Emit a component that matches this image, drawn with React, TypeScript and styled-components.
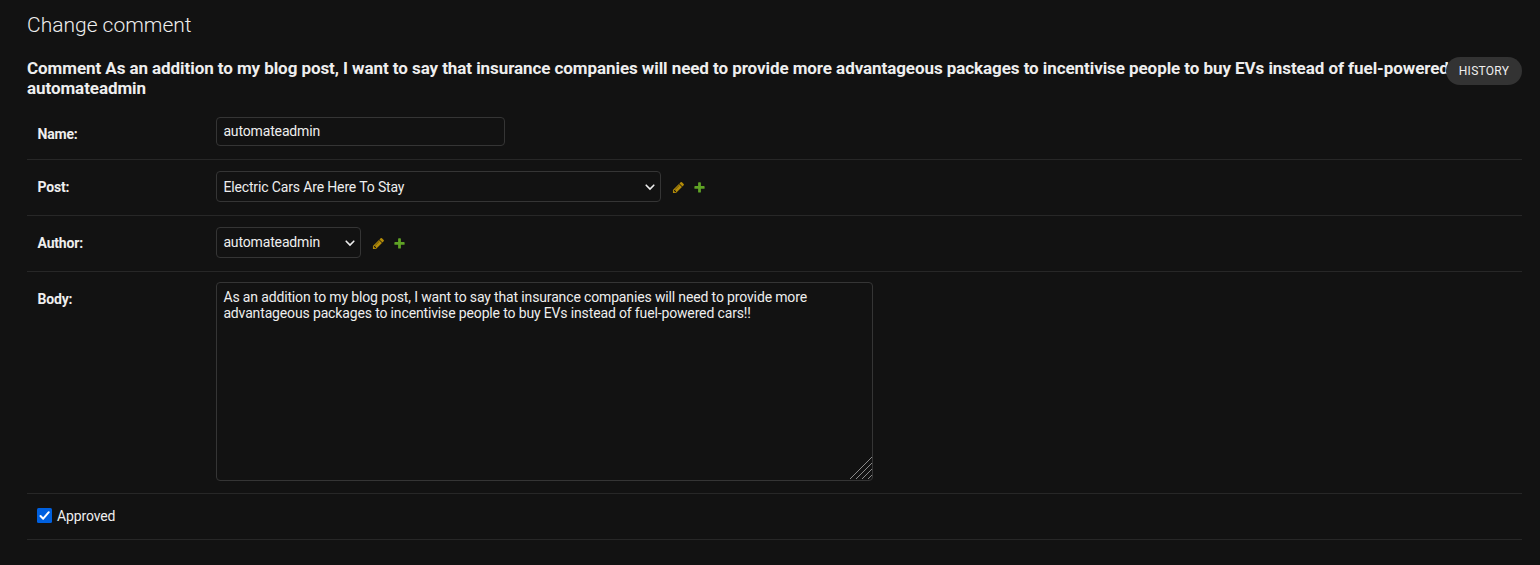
import React from "react";
import styled, { createGlobalStyle } from "styled-components";

const GlobalStyle = createGlobalStyle`
  * { box-sizing: border-box; }
  html, body { margin: 0; background: #121212; }
  body {
    color: #eeeeee;
    font-family: Roboto, "Open Sans", sans-serif;
    font-size: 14px;
    line-height: 16px;
    color-scheme: dark;
  }
`;

const Page = styled.main`
  height: 565px;
  padding: 12px 18px 0 27px;
  overflow: hidden;
`;

const Title = styled.h1`
  margin: 0;
  font-size: 21px;
  line-height: 26px;
  font-weight: 300;
`;

const Header = styled.header`
  position: relative;
  margin-top: 20px;
`;

const Subtitle = styled.h2`
  margin: 0;
  font-size: 17px;
  line-height: 20px;
  font-weight: 700;
  letter-spacing: -0.072px;
  white-space: nowrap;
`;

const HistoryButton = styled.button`
  position: absolute;
  top: -1px;
  right: 0;
  width: 76px;
  height: 28px;
  padding: 0;
  border: 0;
  border-radius: 14px;
  background: #333333;
  color: #eeeeee;
  font: 400 12px/28px Roboto, sans-serif;
  letter-spacing: 0.28px;
`;

const Fieldset = styled.form`
  margin-top: 9px;
`;

const Row = styled.div<{ $height: number }>`
  display: flex;
  align-items: flex-start;
  height: ${(p) => p.$height}px;
  padding: 10px;
  border-bottom: 1px solid #272727;
`;

const Label = styled.label`
  flex: none;
  width: 179px;
  padding: 9px 0 0 0.5px;
  font-weight: 700;
  letter-spacing: -0.18px;
`;

const control = `
  display: block;
  margin: 0;
  border: 1px solid #353535;
  border-radius: 4px;
  background: #121212;
  color: #eeeeee;
  font: 400 14px/16px Roboto, sans-serif;
  letter-spacing: -0.144px;
  outline: none;
`;

const TextInput = styled.input`
  ${control}
  width: 289px;
  height: 29px;
  padding: 4px 6.4px 6px;
`;

const SelectBox = styled.div<{ $width: number }>`
  position: relative;
  width: ${(p) => p.$width}px;
  margin-top: 1px;
`;

const Select = styled.select<{ $lift: number }>`
  ${control}
  appearance: none;
  width: 100%;
  height: 31px;
  padding: 0 24px ${(p) => p.$lift * 2}px 6.4px;
`;

const Chevron = styled.svg`
  position: absolute;
  top: 13px;
  right: 6px;
  pointer-events: none;
`;

const Related = styled.div`
  display: flex;
  gap: 8px;
  margin: 11px 0 0 11px;
  svg { display: block; }
`;

const AreaBox = styled.div`
  position: relative;
`;

const TextArea = styled.textarea`
  ${control}
  width: 657px;
  height: 199px;
  padding: 6px 6.4px;
  resize: none;
`;

const Grip = styled.svg`
  position: absolute;
  right: 1px;
  bottom: 2px;
  pointer-events: none;
`;

const CheckLabel = styled.label`
  display: flex;
  align-items: flex-start;
  gap: 5px;
  margin-top: 4px;
  letter-spacing: -0.12px;
`;

const PencilIcon = () => (
  <svg width="13" height="13" viewBox="0 0 1792 1792" fill="#b48c08">
    <path d="M491 1536l91-91-235-235-91 91v107h128v128h107zm523-928q0-22-22-22-10 0-17 7l-542 542q-7 7-7 17 0 22 22 22 10 0 17-7l542-542q7-7 7-17zm-54-192l416 416-832 832h-416v-416zm683 96q0 53-37 90l-166 166-416-416 166-165q36-38 90-38 53 0 91 38l235 234q37 39 37 91z" />
  </svg>
);

const PlusIcon = () => (
  <svg width="13" height="13" viewBox="0 0 1792 1792" fill="#5fa225">
    <path d="M1600 796v192q0 40-28 68t-68 28h-416v416q0 40-28 68t-68 28h-192q-40 0-68-28t-28-68v-416h-416q-40 0-68-28t-28-68v-192q0-40 28-68t68-28h416v-416q0-40 28-68t68-28h192q40 0 68 28t28 68v416h416q40 0 68 28t28 68z" />
  </svg>
);

const CheckedBox = () => (
  <svg width="15" height="15" viewBox="0 0 15 15">
    <rect width="15" height="15" rx="1.5" fill="#0060df" />
    <path d="M3.5 8l2.7 2.7L11.8 4.2" fill="none" stroke="#fff" strokeWidth="2" strokeLinecap="round" strokeLinejoin="round" />
  </svg>
);

const RelatedSelect = ({ value, width, lift = 0 }: { value: string; width: number; lift?: number }) => (
  <>
    <SelectBox $width={width}>
      <Select defaultValue={value} $lift={lift}>
        <option>{value}</option>
      </Select>
      <Chevron width="10" height="7" viewBox="0 0 10 7">
        <path d="M1.2 1.2L5 5l3.8-3.8" fill="none" stroke="#eee" strokeWidth="1.6" strokeLinecap="round" />
      </Chevron>
    </SelectBox>
    <Related>
      <PencilIcon />
      <PlusIcon />
    </Related>
  </>
);

export default function App() {
  return (
    <>
      <GlobalStyle />
      <Page>
        <Title>Change comment</Title>
        <Header>
          <Subtitle>
            Comment As an addition to my blog post, I want to say that insurance companies will need to provide more
            advantageous packages to incentivise people to buy EVs instead of fuel-powered
            <br />
            automateadmin
          </Subtitle>
          <HistoryButton type="button">HISTORY</HistoryButton>
        </Header>
        <Fieldset>
          <Row $height={53}>
            <Label>Name:</Label>
            <TextInput defaultValue="automateadmin" />
          </Row>
          <Row $height={56}>
            <Label>Post:</Label>
            <RelatedSelect value="Electric Cars Are Here To Stay" width={445} />
          </Row>
          <Row $height={56}>
            <Label>Author:</Label>
            <RelatedSelect value="automateadmin" width={145} lift={1} />
          </Row>
          <Row $height={222}>
            <Label>Body:</Label>
            <AreaBox>
              <TextArea
                spellCheck={false}
                defaultValue="As an addition to my blog post, I want to say that insurance companies will need to provide more advantageous packages to incentivise people to buy EVs instead of fuel-powered cars!!"
              />
              <Grip width="22" height="22" viewBox="0 0 22 22">
                <path d="M0 22L22 0M6 22L22 6M12 22L22 12M18 22L22 18" stroke="#8a8a8a" strokeWidth="1" />
              </Grip>
            </AreaBox>
          </Row>
          <Row $height={46}>
            <CheckLabel>
              <CheckedBox />
              Approved
            </CheckLabel>
          </Row>
        </Fieldset>
      </Page>
    </>
  );
}
